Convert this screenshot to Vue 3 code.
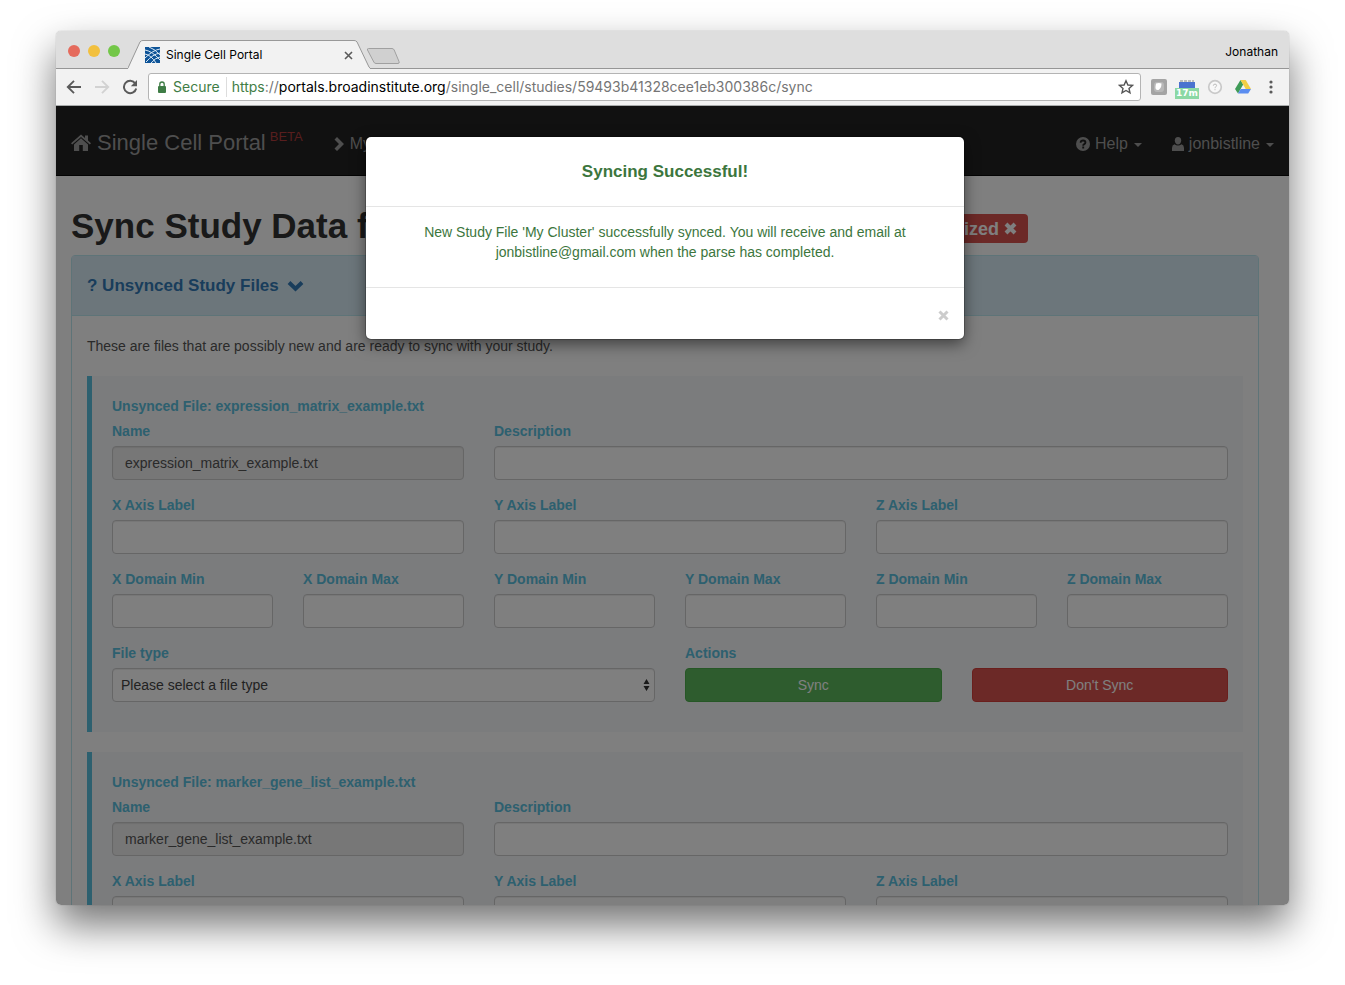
<script setup>
import { ref } from 'vue'

const fileTypes = ['Please select a file type', 'Cluster', 'Expression Matrix', 'Gene List', 'Metadata']
const files = ref([
  { id: 'a', name: 'expression_matrix_example.txt' },
  { id: 'b', name: 'marker_gene_list_example.txt' }
])
const axes = ['X', 'Y', 'Z']
const domains = ['X Domain Min', 'X Domain Max', 'Y Domain Min', 'Y Domain Max', 'Z Domain Min', 'Z Domain Max']
</script>

<template>
  <div class="desktop">
    <div class="window">
      <header class="tabstrip">
        <div class="lights"><i class="red"></i><i class="amber"></i><i class="green"></i></div>
        <div class="tab">
          <svg class="tab-shape" viewBox="0 0 242 30" preserveAspectRatio="none" aria-hidden="true">
            <path d="M0 29.5 L12 2 Q13 .5 15 .5 H226 Q228 .5 229 2 L241 28 Q242 29.5 242 29.5 V30 H0Z" fill="#f2f2f2" />
            <path d="M0 29 L12 2 Q13 .5 15 .5 H226 Q228 .5 229 2 L241 28 L242 29" fill="none" stroke="#969696" />
          </svg>
          <svg class="favicon" viewBox="0 0 15 16" aria-hidden="true">
            <rect width="15" height="16" fill="#0d5397" />
            <path d="M0 3 Q7 4 15 13 M0 7 Q6 8 11 16 M15 2 Q8 3 0 11 M15 6 Q8 7 1 15 M4 0 Q10 2 15 8 M15 10 Q10 11 6 16" fill="none" stroke="#dbe9f5" stroke-width="1" />
          </svg>
          <span class="tab-title">Single Cell Portal</span>
          <button class="plain tab-close" aria-label="Close tab">
            <svg width="9" height="9" viewBox="0 0 9 9"><path d="M1 1 8 8M8 1 1 8" stroke="#5a5a5a" stroke-width="1.6" /></svg>
          </button>
        </div>
        <button class="plain newtab" aria-label="New tab">
          <svg width="35" height="18" viewBox="0 0 35 18"><path d="M2.500 1.500H26Q27.500 1.500 28.200 3L33 14.500Q33.800 16.500 32 16.500H10Q8.500 16.500 7.800 15L1.500 3Q1 1.500 2.500 1.500Z" fill="#d0d0d0" stroke="#a0a0a0" /></svg>
        </button>
        <span class="profile">Jonathan</span>
      </header>

      <div class="toolbar">
        <button class="plain nav-btn" aria-label="Back">
          <svg width="16" height="16" viewBox="0 0 16 16"><path d="M15 8H2M8 1.800 1.800 8 8 14.200" fill="none" stroke="#5a5a5a" stroke-width="1.900" /></svg>
        </button>
        <button class="plain nav-btn" aria-label="Forward">
          <svg width="16" height="16" viewBox="0 0 16 16"><path d="M1 8H14M8 1.800 14.200 8 8 14.200" fill="none" stroke="#d2d2d2" stroke-width="1.900" /></svg>
        </button>
        <button class="plain nav-btn" aria-label="Reload">
          <svg width="16" height="16" viewBox="0 0 16 16"><path d="M13.300 4.500A6.200 6.200 0 1 0 14.200 9.500" fill="none" stroke="#5a5a5a" stroke-width="2" /><path d="M15 1V7.200H8.800Z" fill="#5a5a5a" /></svg>
        </button>
        <div class="address">
          <svg class="lock" width="10" height="12" viewBox="0 0 10 12" aria-hidden="true"><rect x="1" y="5" width="8" height="7" rx="1" fill="#3f7d46" /><path d="M2.800 5.500V3.200A2.200 2.200 0 0 1 7.200 3.200V5.500" fill="none" stroke="#3f7d46" stroke-width="1.300" /></svg>
          <span class="secure">Secure</span>
          <span class="url"><span class="scheme">https</span>://<b>portals.broadinstitute.org</b>/single_cell/studies/59493b41328cee1eb300386c/sync</span>
          <button class="plain star" aria-label="Bookmark">
            <svg width="16" height="16" viewBox="0 0 16 16"><path d="M8 1.800 9.900 6 14.400 6.400 11 9.400 12 13.900 8 11.500 4 13.900 5 9.400 1.600 6.400 6.100 6Z" fill="none" stroke="#555" stroke-width="1.400" /></svg>
          </button>
        </div>
        <div class="extensions">
          <button class="plain ext" aria-label="Extension">
            <svg width="16" height="16" viewBox="0 0 16 16"><rect width="16" height="16" rx="2" fill="#a4a4a4" /><rect x="3" y="3" width="10" height="10" rx="3" fill="#b8b8b8" /><path d="M5 4.500Q8 3.500 10.500 4.500Q10.500 9 7.500 11Q4 11.500 4.500 7.500Z" fill="#fff" /></svg>
          </button>
          <button class="plain ext timer" aria-label="Timer">
            <svg width="16" height="8" viewBox="0 0 16 8"><path d="M1 1H15" stroke="#bbb" stroke-width="2" stroke-dasharray="3 1" /><rect y="2" width="16" height="6" fill="#4a72cf" /></svg>
            <span class="badge">17m</span>
          </button>
          <button class="plain ext" aria-label="Help extension">
            <svg width="16" height="16" viewBox="0 0 16 16"><circle cx="8" cy="8" r="6.300" fill="#f8f8f8" stroke="#c9c9c9" stroke-width="1.700" /><path d="M6.300 6.700Q6.400 5.100 8 5.100T9.600 6.600Q9.600 7.400 8.700 7.900T8 9.200M8 10.200V11.200" fill="none" stroke="#bbb" /></svg>
          </button>
          <button class="plain ext" aria-label="Drive">
            <svg width="16" height="16" viewBox="0 0 16 16"><path d="M5.500 1 8.200 5.600 3 14.500 0 9.900Z" fill="#3f9b57" /><path d="M5.500 1H10.700L16 9.900H10.700Z" fill="#f2cf45" /><path d="M5.700 9.900H16L13.200 14.500H3Z" fill="#5b8df0" /></svg>
          </button>
          <button class="plain ext" aria-label="Menu">
            <svg width="4" height="14" viewBox="0 0 4 14"><g fill="#5a5a5a"><circle cx="2" cy="2" r="1.600" /><circle cx="2" cy="7" r="1.600" /><circle cx="2" cy="12" r="1.600" /></g></svg>
          </button>
        </div>
      </div>

      <div class="viewport">
        <nav class="navbar">
          <a class="brand" href="#">
            <svg width="20" height="17" viewBox="0 0 20 17" aria-hidden="true"><path d="M10 .5 0 9.200 1.200 10.500 10 2.900 18.800 10.500 20 9.200 17 6.500V1.500H14V4Z" /><path d="M10 4.300 3 10.400V17H8.200V11H11.800V17H17V10.400Z" /></svg>
            <span>Single Cell Portal</span>
            <sup>BETA</sup>
          </a>
          <a class="nav-link studies" href="#">
            <svg width="11" height="14" viewBox="0 0 11 14" aria-hidden="true"><path d="M3 0 .5 2.500 5 7 .5 11.500 3 14 10 7Z" /></svg>
            <span>My Studies</span>
          </a>
          <div class="nav-right">
            <a class="nav-link" href="#">
              <svg width="14" height="14" viewBox="0 0 14 14" aria-hidden="true"><circle cx="7" cy="7" r="7" /><path d="M4.700 5.700Q4.600 3.500 7.100 3.500Q9.400 3.500 9.400 5.400Q9.400 6.400 8.200 7.100Q7.200 7.600 7.200 8.700M7.200 9.600V11.400" fill="none" stroke="#222" stroke-width="1.900" /></svg>
              <span>Help</span><i class="caret"></i>
            </a>
            <a class="nav-link" href="#">
              <svg width="12" height="14" viewBox="0 0 12 14" aria-hidden="true"><path d="M6 0C8.200 0 9.200 1.500 9.200 3.500S7.900 7.500 6 7.500 2.800 5.500 2.800 3.500 3.800 0 6 0Z" /><path d="M2.500 7.200Q4 8.600 6 8.600T9.500 7.200Q12 8 12 11V14H0V11Q0 8 2.500 7.200Z" /></svg>
              <span>jonbistline</span><i class="caret"></i>
            </a>
          </div>
        </nav>

        <main class="container">
          <h1>
            <span>Sync Study Data for</span>
            <span class="label-danger">Unsynchronized
              <svg width="13" height="13" viewBox="0 0 13 13" aria-hidden="true"><path d="M2 2 11 11M11 2 2 11" stroke="#fff" stroke-width="4" /></svg>
            </span>
          </h1>

          <section class="panel">
            <h2>
              <a href="#">? Unsynced Study Files
                <svg width="17" height="12" viewBox="0 0 17 12" aria-hidden="true"><path d="M2 2.500 8.500 8.700 15 2.500" fill="none" stroke="#337ab7" stroke-width="4" /></svg>
              </a>
            </h2>
            <div class="panel-body">
              <p>These are files that are possibly new and are ready to sync with your study.</p>
              <form v-for="f in files" :key="f.id" class="callout" @submit.prevent>
                <h3>Unsynced File: {{ f.name }}</h3>
                <div class="grid">
                  <div class="field s4">
                    <label :for="f.id + 'name'">Name</label>
                    <input :id="f.id + 'name'" type="text" :value="f.name" readonly />
                  </div>
                  <div class="field s8">
                    <label :for="f.id + 'desc'">Description</label>
                    <input :id="f.id + 'desc'" type="text" />
                  </div>
                  <div v-for="a in axes" :key="a" class="field s4">
                    <label :for="f.id + a">{{ a }} Axis Label</label>
                    <input :id="f.id + a" type="text" />
                  </div>
                  <div v-for="d in domains" :key="d" class="field s2">
                    <label :for="f.id + d">{{ d }}</label>
                    <input :id="f.id + d" type="text" />
                  </div>
                  <div class="field s6">
                    <label :for="f.id + 'type'">File type</label>
                    <div class="select">
                      <select :id="f.id + 'type'">
                        <option v-for="t in fileTypes" :key="t">{{ t }}</option>
                      </select>
                      <svg width="7" height="12" viewBox="0 0 7 12" aria-hidden="true"><path d="M3.500 0 6.500 5H.5ZM3.500 12 .5 7H6.500Z" fill="#333" /></svg>
                    </div>
                  </div>
                  <div class="field s6">
                    <span class="caption">Actions</span>
                    <div class="actions">
                      <button class="btn success">Sync</button>
                      <button class="btn danger">Don't Sync</button>
                    </div>
                  </div>
                </div>
              </form>
            </div>
          </section>
        </main>

        <div class="backdrop">
          <div class="modal" role="dialog" aria-labelledby="modal-title">
            <div class="modal-header"><h4 id="modal-title">Syncing Successful!</h4></div>
            <div class="modal-body">
              <p>New Study File 'My Cluster' successfully synced. You will receive and email at jonbistline@gmail.com when the parse has completed.</p>
            </div>
            <div class="modal-footer">
              <button class="plain" aria-label="Close">
                <svg width="11" height="11" viewBox="0 0 11 11"><path d="M1.500 1.500 9.500 9.500M9.500 1.500 1.500 9.500" stroke="#ccc" stroke-width="3" /></svg>
              </button>
            </div>
          </div>
        </div>
      </div>
    </div>
  </div>
</template>

<style>
body { margin: 0; background: #fff; }
</style>

<style scoped>
* { box-sizing: border-box; }
.desktop {
  height: 100vh;
  padding: 31px 56px 80px;
  overflow: hidden;
  font-family: "Liberation Sans", Arial, sans-serif;
  font-size: 14px;
  line-height: 20px;
  color: #333;
}
.window {
  display: flex;
  flex-direction: column;
  height: 100%;
  border-radius: 5px;
  overflow: hidden;
  box-shadow: 0 0 1px rgba(0, 0, 0, .4), 0 20px 40px rgba(0, 0, 0, .55);
}
.plain { padding: 0; border: 0; background: none; display: flex; align-items: center; justify-content: center; }
svg { display: block; flex: none; }
a { text-decoration: none; }

.tabstrip {
  display: flex;
  align-items: flex-end;
  flex: none;
  height: 38px;
  background: #dedede;
  border-bottom: 1px solid #969696;
  font: 12px/16px Inter, sans-serif;
  color: #000;
}
.lights { display: flex; gap: 8px; padding: 0 8px 11px 12px; }
.lights i { width: 12px; height: 12px; border-radius: 50%; }
.red { background: #e56b5d; }
.amber { background: #f2c03e; }
.green { background: #73c748; }
.tab { position: relative; display: flex; align-items: center; gap: 6px; width: 242px; height: 28px; padding: 2px 17px 0; }
.tab-shape { position: absolute; left: 0; top: 0; width: 100%; height: 29px; }
.favicon { position: relative; width: 15px; height: 16px; }
.tab-title { position: relative; flex: 1; }
.tab-close { position: relative; }
.newtab { margin: 0 0 3px -4px; }
.profile { margin-left: auto; padding: 0 11px 8px 0; }

.toolbar {
  display: flex;
  align-items: center;
  flex: none;
  height: 37px;
  padding: 0 4px;
  background: #f2f2f2;
  border-bottom: 1px solid #a8abab;
}
.nav-btn { width: 28px; height: 28px; }
.address {
  display: flex;
  align-items: center;
  flex: 1;
  min-width: 0;
  height: 28px;
  margin: 0 4px;
  padding: 0 6px 0 8px;
  background: #fff;
  border: 1px solid #b4b4b4;
  border-radius: 3px;
  font: 14px/20px Inter, sans-serif;
  color: #757575;
  white-space: nowrap;
}
.secure { margin-left: 6px; padding-right: 6px; border-right: 1px solid #ddd; color: #3f7d46; }
.url { flex: 1; min-width: 0; margin-left: 5px; overflow: hidden; }
.url b { font-weight: 400; color: #000; }
.scheme { color: #3f7d46; }
.extensions { display: flex; }
.ext { width: 28px; height: 28px; }
.timer { flex-direction: column; padding-top: 4px; }
.badge { width: 24px; height: 11px; background: #8bd8a4; color: #fff; font: bold 9px/11px "DejaVu Sans", sans-serif; text-align: center; }

.viewport { position: relative; flex: 1; min-height: 0; overflow: hidden; background: #fff; }
.navbar {
  display: flex;
  align-items: center;
  height: 70px;
  padding: 4px 15px 0;
  background: #222;
  border-bottom: 1px solid #080808;
  color: #9d9d9d;
  fill: #9d9d9d;
}
.brand { display: flex; align-items: center; gap: 6px; color: inherit; font-size: 22px; line-height: 26px; }
.brand sup { align-self: flex-start; margin-left: -2px; color: #b13c3c; font-size: 13px; line-height: 14px; }
.nav-link { display: flex; align-items: center; gap: 5px; margin-top: 2px; color: inherit; font-size: 16px; }
.studies { margin-left: 31px; }
.nav-right { display: flex; gap: 30px; margin-left: auto; }
.caret { margin: 2px 0 0 1px; border: 4px solid transparent; border-top-color: #9d9d9d; border-bottom: 0; }

.container { padding: 30px 30px 0 15px; }
h1, h2, h3, h4, p { margin: 0; }
h1 {
  display: flex;
  align-items: center;
  justify-content: space-between;
  max-width: 957px;
  margin-bottom: 9px;
  font-size: 35px;
  line-height: 40px;
  white-space: nowrap;
}
.label-danger {
  display: flex;
  align-items: center;
  gap: 5px;
  height: 29px;
  margin-top: 5px;
  padding: 0 11px;
  border-radius: 4px;
  background: #d9534f;
  color: #fff;
  font-size: 18px;
}
.panel { border: 1px solid #bce8f1; border-radius: 4px; }
h2 { padding: 20px 15px 19px; background: #d9edf7; border-bottom: 1px solid #bce8f1; font-size: 17px; line-height: 20px; }
h2 a { display: flex; align-items: center; gap: 8px; color: #337ab7; }
.panel-body { padding: 20px 15px; }
.panel-body p { margin-bottom: 20px; color: #555; }
.callout { margin-bottom: 20px; padding: 20px 15px 15px 20px; border-left: 5px solid #5bc0de; background: #f6f8fb; }
h3, label, .caption { color: #5bc0de; font-size: 14px; line-height: 20px; font-weight: 700; }
h3 { margin-bottom: 5px; }
.grid { display: grid; grid-template-columns: repeat(12, minmax(0, 1fr)); column-gap: 30px; }
.field { display: flex; flex-direction: column; gap: 5px; padding-bottom: 15px; }
.s2 { grid-column: span 2; }
.s4 { grid-column: span 4; }
.s6 { grid-column: span 6; }
.s8 { grid-column: span 8; }
input, select {
  width: 100%;
  height: 34px;
  padding: 6px 12px;
  border: 1px solid #ccc;
  border-radius: 4px;
  background: #fff;
  box-shadow: inset 0 1px 1px rgba(0, 0, 0, .075);
  color: #555;
  font: inherit;
}
input[readonly] { background: #eee; }
.select { position: relative; }
select { appearance: none; padding: 0 8px; color: #444; }
.select svg { position: absolute; right: 5px; top: 11px; }
.actions { display: grid; grid-template-columns: 1fr 1fr; gap: 30px; }
.btn { height: 34px; border: 1px solid; border-radius: 4px; color: #fff; font: inherit; }
.success { background: #5cb85c; border-color: #4cae4c; }
.danger { background: #d9534f; border-color: #d43f3a; }

.backdrop { position: absolute; inset: 0; padding: 31px 15px 0 0; background: rgba(0, 0, 0, .5); }
.modal {
  width: 598px;
  max-width: 100%;
  margin: 0 auto;
  border-radius: 5px;
  background: #fff;
  box-shadow: 0 0 0 1px rgba(0, 0, 0, .2), 0 5px 15px rgba(0, 0, 0, .5);
  color: #3c763d;
  text-align: center;
}
.modal-header { padding: 25px 15px 24px; border-bottom: 1px solid #e5e5e5; }
h4 { font-size: 17px; line-height: 20px; }
.modal-body { padding: 15px 15px 25px; }
.modal-body p { padding: 0 30px; }
.modal-footer { display: flex; justify-content: flex-end; padding: 22px 15px 18px; border-top: 1px solid #e5e5e5; }
</style>
